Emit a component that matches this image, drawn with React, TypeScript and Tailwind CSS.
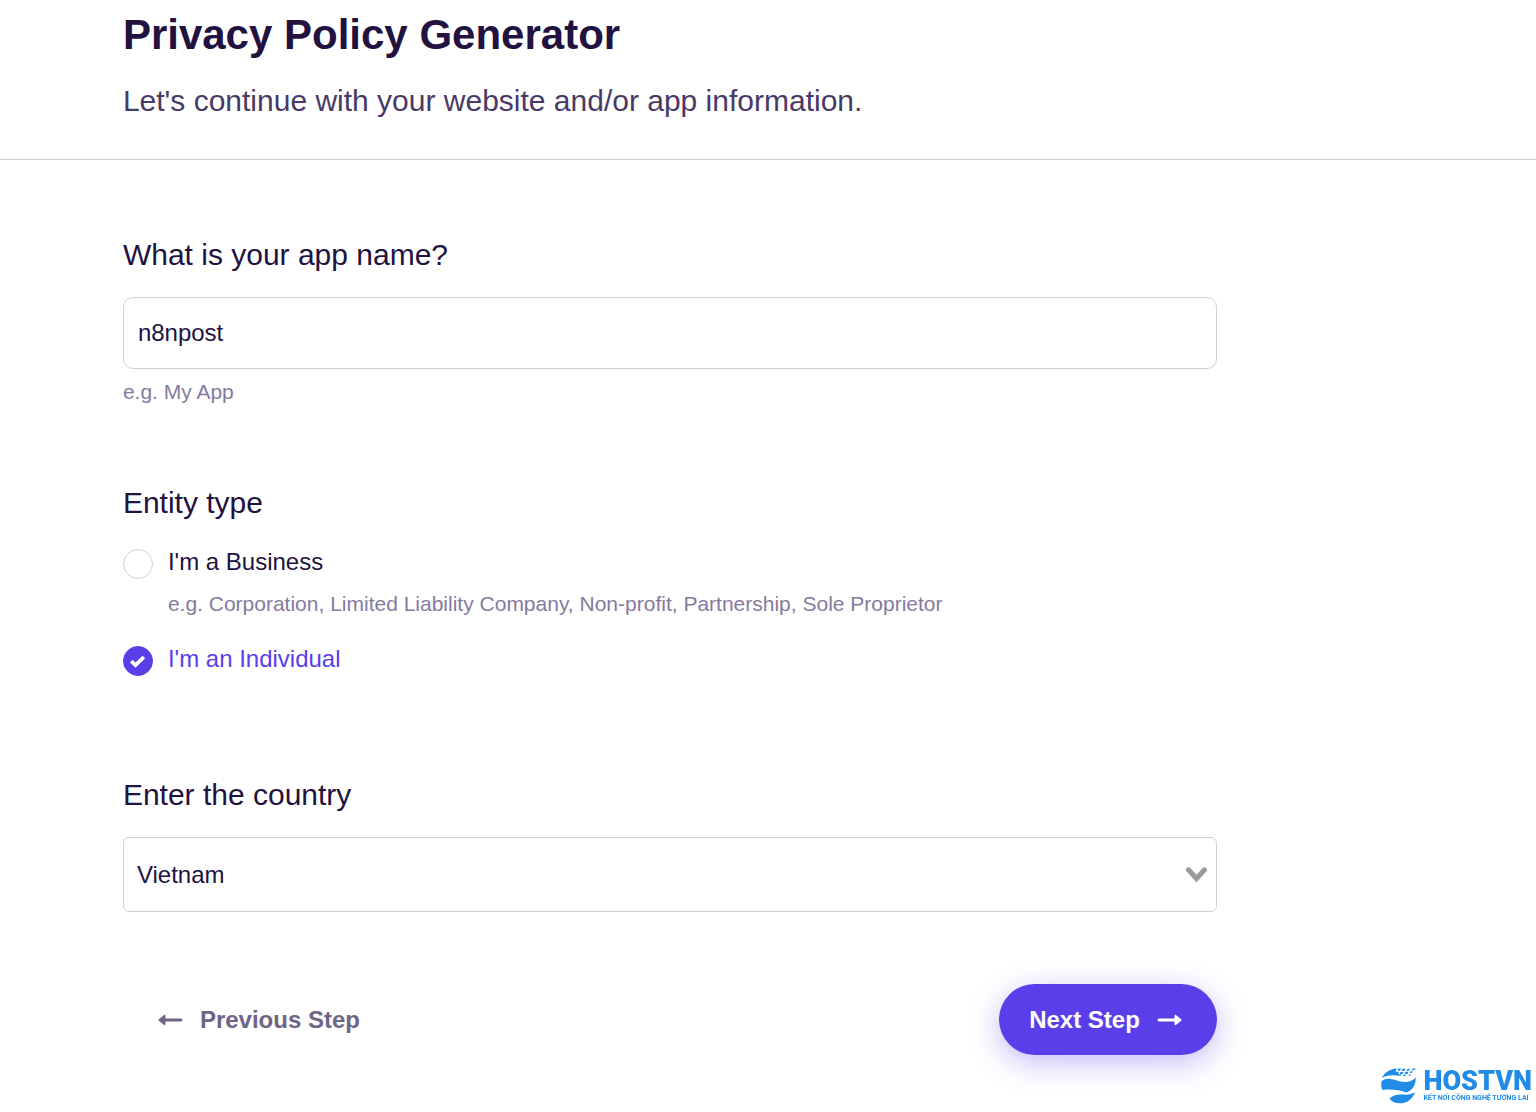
import { useState } from 'react'
import type { ReactNode } from 'react'

const entityTypes = [
  {
    id: 'business',
    label: "I'm a Business",
    hint: 'e.g. Corporation, Limited Liability Company, Non-profit, Partnership, Sole Proprietor',
  },
  { id: 'individual', label: "I'm an Individual", hint: '' },
]

const countries = ['Vietnam', 'Thailand', 'Singapore', 'United States']

function Arrow({ back = false }: { back?: boolean }) {
  return (
    <svg
      viewBox="0 0 26 12"
      className={back ? 'h-3 w-[26px] rotate-180' : 'h-3 w-[26px]'}
      fill="currentColor"
      aria-hidden="true"
    >
      <path d="M2 4.6h15.5V2c0-1 .9-1.500 1.700-.8l5 4c.6.500.6 1.100 0 1.600l-5 4c-.8.700-1.700.2-1.700-.8V7.400H2a1.400 1.400 0 0 1 0-2.800z" />
    </svg>
  )
}

function EntityOption({
  id,
  label,
  hint,
  checked,
  onSelect,
}: {
  id: string
  label: string
  hint: string
  checked: boolean
  onSelect: () => void
}) {
  return (
    <div className="flex items-start gap-[15px]">
      <span className="mt-[3px] grid shrink-0">
        <input
          id={id}
          type="radio"
          name="entity"
          checked={checked}
          onChange={onSelect}
          className="col-start-1 row-start-1 size-[30px] appearance-none rounded-full border border-[#d0d0d8] bg-white checked:border-[#5a3eea] checked:bg-[#5a3eea]"
        />
        {checked && (
          <svg
            viewBox="0 0 30 30"
            className="pointer-events-none col-start-1 row-start-1 size-[30px]"
            aria-hidden="true"
          >
            <path d="M8.300 15.200l4.200 4 8.400-8.200" fill="none" stroke="#fff" strokeWidth="3.800" />
          </svg>
        )}
      </span>
      <div>
        <label
          htmlFor={id}
          className={`block text-2xl leading-8 ${checked ? 'text-[#5a3eea]' : 'text-[#21123f]'}`}
        >
          {label}
        </label>
        {hint && <p className="mt-3 text-[21px] leading-7 text-[#857a9e]">{hint}</p>}
      </div>
    </div>
  )
}

function Heading({ children }: { children: ReactNode }) {
  return <span className="block text-[30px] leading-10">{children}</span>
}

function HostLogo() {
  return (
    <div className="fixed right-1 bottom-2 flex items-end gap-[7px] text-[#218be8]">
      <svg viewBox="0 0 35 36" className="h-9 w-[35px]" fill="currentColor" aria-hidden="true">
        <path d="M.8 10C4 4 9 1 16 .5l-1.500 3 3.500.5-.8 2.300 3.300.2-.5 1.500C12 6.500 5.500 7 .8 10z" />
        <path d="M17.500.5h2.500l-1 2.300h-2.500zM21.500.8h3l-1 2.200h-3zM26.500.8h2.500l-1 2h-2.500zM31.500.5h3l-1 1.800h-3zM19.500 4h3l-1 2h-3zM24.500 3.800h3l-1 2.200h-3zM29.500 3.200h2.200l-.8 1.800h-2.200zM22.500 6.700h2.500l-.8 1.600h-2.500zM28 6.500h1.800l-.7 1.300h-1.800z" />
        <path d="M.5 13.500C3 10 9 10.300 15 12.300c8 2.700 15 2.400 19.700-2.800C35 17 31.500 22 25.500 24.500 19 22 10 20.800 1.500 22 .2 19.500 0 16.500.5 13.500z" />
        <path d="M8.500 30.500C12 26.500 17.500 26 23 26.600c4.500.3 8-.6 11-2.600-2 6.300-6.500 10.300-13 11.200-5 .6-10-.8-12.500-4.700z" />
      </svg>
      <div className="font-['Roboto',sans-serif] whitespace-nowrap">
        <p className="text-[27px] leading-6 font-black">HOSTVN</p>
        <p className="text-[7px] leading-[11px] font-bold">KẾT NỐI CÔNG NGHỆ TƯƠNG LAI</p>
      </div>
    </div>
  )
}

export default function App() {
  const [appName, setAppName] = useState('n8npost')
  const [entity, setEntity] = useState('individual')
  const [country, setCountry] = useState('Vietnam')

  return (
    <div className="min-h-screen bg-white font-['Liberation_Sans',Arial,sans-serif] text-[#21123f]">
      <header className="border-b border-[#d0d0d8] px-[8%] pt-[11px] pb-[38px]">
        <h1 className="text-[42px] leading-[48px] font-bold">Privacy Policy Generator</h1>
        <p className="mt-[22px] text-[30px] leading-10 text-[#483a66]">
          Let's continue with your website and/or app information.
        </p>
      </header>
      <main className="px-[8%] pt-[75px]">
        <form className="max-w-[1094px]" onSubmit={(e) => e.preventDefault()}>
          <label htmlFor="app-name">
            <Heading>What is your app name?</Heading>
          </label>
          <input
            id="app-name"
            type="text"
            value={appName}
            onChange={(e) => setAppName(e.target.value)}
            className="mt-[22px] block h-[72px] w-full rounded-[10px] border border-[#d0d0d8] bg-white px-[14px] text-2xl outline-none"
          />
          <p className="mt-[9px] text-[21px] leading-7 text-[#857a9e]">e.g. My App</p>

          <fieldset className="mt-[77px]">
            <legend>
              <Heading>Entity type</Heading>
            </legend>
            <div className="mt-[23px] space-y-[25px]">
              {entityTypes.map((item) => (
                <EntityOption
                  key={item.id}
                  {...item}
                  checked={entity === item.id}
                  onSelect={() => setEntity(item.id)}
                />
              ))}
            </div>
          </fieldset>

          <label htmlFor="country" className="mt-[99px] block">
            <Heading>Enter the country</Heading>
          </label>
          <div className="mt-[22px] grid items-center">
            <select
              id="country"
              value={country}
              onChange={(e) => setCountry(e.target.value)}
              className="col-start-1 row-start-1 h-[75px] w-full appearance-none rounded-md border border-[#d0d0d8] bg-white px-[13px] text-2xl outline-none"
            >
              {countries.map((name) => (
                <option key={name}>{name}</option>
              ))}
            </select>
            <svg
              viewBox="0 0 22 16"
              className="pointer-events-none col-start-1 row-start-1 mr-[9px] h-4 w-[22px] justify-self-end"
              aria-hidden="true"
            >
              <path d="M2.500 2.800l8 8.700 8-8.700" fill="none" stroke="#999" strokeWidth="5" strokeLinecap="round" />
            </svg>
          </div>

          <div className="mt-[72px] flex items-center justify-between text-2xl font-bold">
            <button type="button" className="flex h-[71px] items-center gap-[17px] px-[34px] text-[#6f6488]">
              <Arrow back />
              Previous Step
            </button>
            <button
              type="submit"
              className="flex h-[71px] items-center gap-[17px] rounded-full bg-[#5a3eea] pr-[34px] pl-[30px] text-white shadow-[0_8px_30px_rgba(90,62,234,0.35)]"
            >
              Next Step
              <Arrow />
            </button>
          </div>
        </form>
      </main>
      <HostLogo />
    </div>
  )
}
